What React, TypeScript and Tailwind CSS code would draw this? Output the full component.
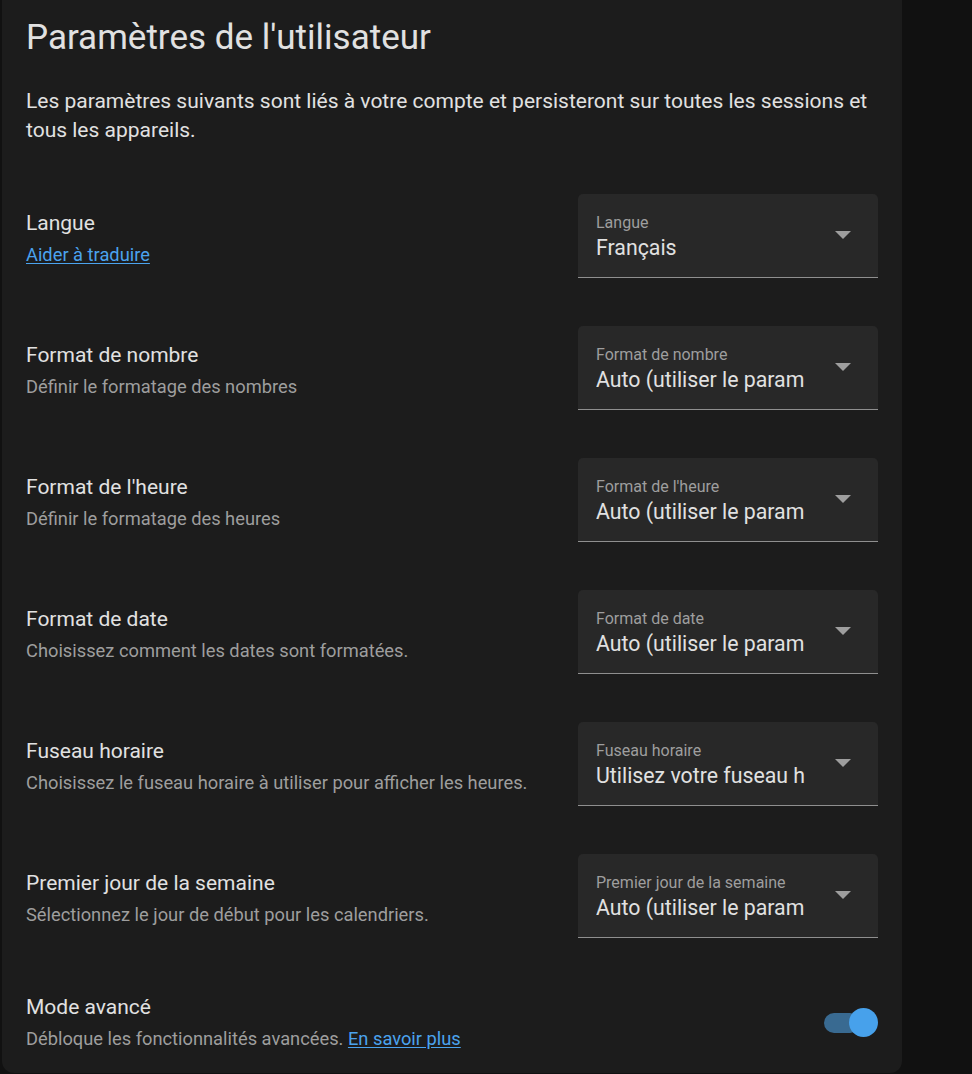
import { ReactNode } from "react";

type Row = {
  title: string;
  description: ReactNode;
  label: string;
  value: string;
};

const rows: Row[] = [
  {
    title: "Langue",
    description: (
      <a href="#" className="text-[#4ba3ee] underline underline-offset-2">
        Aider à traduire
      </a>
    ),
    label: "Langue",
    value: "Français",
  },
  {
    title: "Format de nombre",
    description: "Définir le formatage des nombres",
    label: "Format de nombre",
    value: "Auto (utiliser le paramètre de langue)",
  },
  {
    title: "Format de l'heure",
    description: "Définir le formatage des heures",
    label: "Format de l'heure",
    value: "Auto (utiliser le paramètre de langue)",
  },
  {
    title: "Format de date",
    description: "Choisissez comment les dates sont formatées.",
    label: "Format de date",
    value: "Auto (utiliser le paramètre de langue)",
  },
  {
    title: "Fuseau horaire",
    description: "Choisissez le fuseau horaire à utiliser pour afficher les heures.",
    label: "Fuseau horaire",
    value: "Utilisez votre fuseau horaire local",
  },
  {
    title: "Premier jour de la semaine",
    description: "Sélectionnez le jour de début pour les calendriers.",
    label: "Premier jour de la semaine",
    value: "Auto (utiliser le paramètre de langue)",
  },
];

function Select({ label, value }: { label: string; value: string }) {
  return (
    <div className="relative w-[300px] h-[84px] shrink-0 bg-[#282828] rounded-t-[5px] border-b border-[#8f8f8f]">
      <div className="absolute left-[18px] top-[20px] w-[209px] overflow-hidden whitespace-nowrap">
        <div className="text-[16px] leading-[18px] text-[#9e9e9e]">{label}</div>
        <div className="mt-[2px] text-[21.3px] leading-[28px] text-[#e1e1e1]">{value}</div>
      </div>
      <svg
        className="absolute right-[27px] top-[37px]"
        width="16"
        height="8"
        viewBox="0 0 16 8"
      >
        <path d="M0 0 L16 0 L8 8 Z" fill="#9e9e9e" />
      </svg>
    </div>
  );
}

export default function App() {
  return (
    <div
      className="min-h-[1074px] bg-[#111111] pl-[2px] w-[972px]"
      style={{ fontFamily: "Roboto, 'Noto Sans', sans-serif" }}
    >
      <div className="w-[900px] bg-[#1c1c1c] rounded-b-[12px] px-6 pb-[21px]">
        <h1 className="pt-[12px] text-[35px] leading-[52px] font-normal text-[#e1e1e1]">
          Paramètres de l'utilisateur
        </h1>
        <p className="mt-[23px] text-[21px] leading-[29px] text-[#e1e1e1]">
          Les paramètres suivants sont liés à votre compte et persisteront sur toutes les sessions et
          tous les appareils.
        </p>

        <div className="mt-[25px] flex flex-col">
          {rows.map((row) => (
            <div key={row.title} className="h-[132px] flex items-center justify-between">
              <div className="flex flex-col pt-[4px]">
                <div className="text-[21px] leading-[28px] text-[#e1e1e1]">{row.title}</div>
                <div className="mt-[5px] text-[18.3px] leading-[26px] text-[#9e9e9e]">
                  {row.description}
                </div>
              </div>
              <Select label={row.label} value={row.value} />
            </div>
          ))}

          <div className="flex items-center justify-between pt-[31px]">
            <div className="flex flex-col">
              <div className="text-[21px] leading-[28px] text-[#e1e1e1]">Mode avancé</div>
              <div className="mt-[5px] text-[18.3px] leading-[26px] text-[#9e9e9e]">
                Débloque les fonctionnalités avancées.{" "}
                <a href="#" className="text-[#4ba3ee] underline underline-offset-2">
                  En savoir plus
                </a>
              </div>
            </div>
            <div className="relative w-[54px] h-[30px] flex items-center">
              <div className="w-[36px] h-[20px] rounded-full bg-[#396a91]" />
              <div className="absolute right-0 top-[0px] w-[29px] h-[29px] rounded-full bg-[#47a1eb]" />
            </div>
          </div>
        </div>
      </div>
    </div>
  );
}
